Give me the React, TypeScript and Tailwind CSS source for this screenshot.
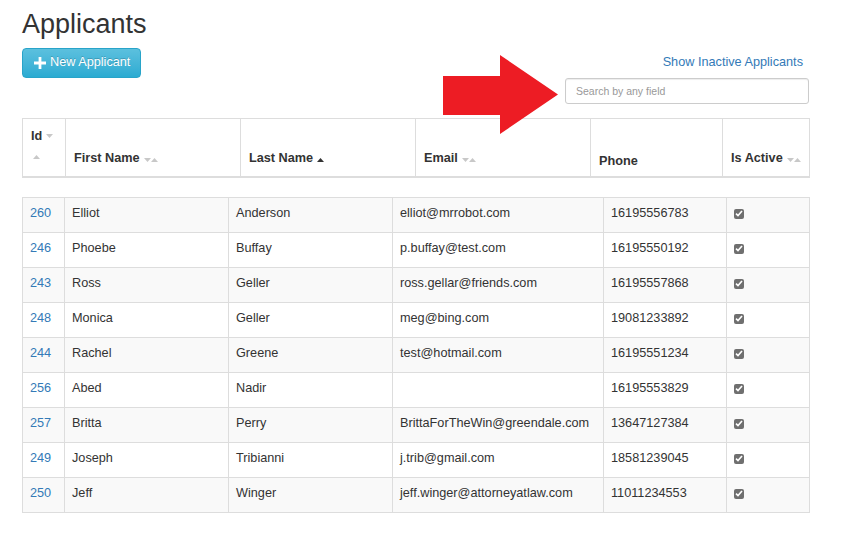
import React from "react";

type Row = { id: number; first: string; last: string; email: string; phone: string };

const rows: Row[] = [
  { id: 260, first: "Elliot", last: "Anderson", email: "elliot@mrrobot.com", phone: "16195556783" },
  { id: 246, first: "Phoebe", last: "Buffay", email: "p.buffay@test.com", phone: "16195550192" },
  { id: 243, first: "Ross", last: "Geller", email: "ross.gellar@friends.com", phone: "16195557868" },
  { id: 248, first: "Monica", last: "Geller", email: "meg@bing.com", phone: "19081233892" },
  { id: 244, first: "Rachel", last: "Greene", email: "test@hotmail.com", phone: "16195551234" },
  { id: 256, first: "Abed", last: "Nadir", email: "", phone: "16195553829" },
  { id: 257, first: "Britta", last: "Perry", email: "BrittaForTheWin@greendale.com", phone: "13647127384" },
  { id: 249, first: "Joseph", last: "Tribianni", email: "j.trib@gmail.com", phone: "18581239045" },
  { id: 250, first: "Jeff", last: "Winger", email: "jeff.winger@attorneyatlaw.com", phone: "11011234553" },
];

function Down({ color = "#c8c8c8" }: { color?: string }) {
  return (
    <svg width="7" height="4" viewBox="0 0 7 4" className="inline-block align-middle">
      <path d="M0 0h7L3.5 4z" fill={color} />
    </svg>
  );
}

function Up({ color = "#c8c8c8" }: { color?: string }) {
  return (
    <svg width="7" height="4" viewBox="0 0 7 4" className="inline-block align-middle">
      <path d="M0 4h7L3.5 0z" fill={color} />
    </svg>
  );
}

function Both() {
  return (
    <span className="ml-1 inline-flex items-center">
      <Down />
      <Up />
    </span>
  );
}

function Check() {
  return (
    <span className="inline-flex h-[10px] w-[10px] items-center justify-center rounded-[2px] bg-[#6f6f6f] align-middle">
      <svg width="8" height="7" viewBox="0 0 8 7">
        <path d="M1 3.6l2 2L7 1" stroke="#fff" strokeWidth="1.6" fill="none" />
      </svg>
    </span>
  );
}

export default function App() {
  const th = "border border-[#ddd] border-b-2 px-2 pt-[9px] pb-[8px] text-left align-bottom text-[12.7px] font-bold leading-5";
  const td = "border border-[#ddd] pl-[7px] pr-2 pt-[6px] pb-[10px] align-top leading-[18px]";

  return (
    <div className="relative min-h-[547px] bg-white pl-[22px] text-[12.7px] text-[#333]" style={{ fontFamily: '"Liberation Sans", Arial, sans-serif' }}>
      <h1 className="pt-[7px] text-[27px] font-normal leading-[34px] text-[#333]">Applicants</h1>

      <div className="mt-[7px] flex w-[787px] items-start justify-between">
        <button className="flex h-[30px] items-center gap-[4px] rounded-[4px] border border-[#28a4c9] bg-gradient-to-b from-[#5bc0de] to-[#2aabd2] pl-[11px] pr-[10px] text-[12.7px] text-white [text-shadow:0_-1px_0_rgba(0,0,0,0.2)]">
          <svg width="12" height="12" viewBox="0 0 13 13">
            <path d="M5 0h3v5h5v3H8v5H5V8H0V5h5z" fill="#fff" />
          </svg>
          New Applicant
        </button>
        <div className="flex flex-col items-end">
          <a className="mr-[6px] mt-[5px] text-[12.7px] leading-[18px] text-[#337ab7]">Show Inactive Applicants</a>
          <input
            placeholder="Search by any field"
            className="mt-[7px] h-[26px] w-[244px] rounded-[3px] border border-[#ccc] px-[10px] text-[10.5px] text-[#555] placeholder:text-[#999] shadow-[inset_0_1px_1px_rgba(0,0,0,0.075)] outline-none"
          />
        </div>
      </div>

      <table className="mt-[14px] w-[787px] table-fixed border-collapse">
        <colgroup>
          <col className="w-[43px]" />
          <col className="w-[175px]" />
          <col className="w-[175px]" />
          <col className="w-[175px]" />
          <col className="w-[132px]" />
          <col className="w-[87px]" />
        </colgroup>
        <thead>
          <tr>
            <th className="border border-[#ddd] border-b-2 px-2 pt-[7px] pb-[10px] text-left align-bottom text-[12.7px] font-bold leading-5">
              <div className="flex h-5 items-center gap-1">Id<Down /></div>
              <div className="flex h-5 items-center pl-[2px] pt-[2px]"><Up /></div>
            </th>
            <th className={th}>First Name<Both /></th>
            <th className={th}>
              Last Name
              <span className="ml-1 inline-flex"><Up color="#333" /></span>
            </th>
            <th className={th}>Email<Both /></th>
            <th className="border border-[#ddd] border-b-2 px-2 pt-[9px] pb-[5px] text-left align-bottom text-[12.7px] font-bold leading-5">Phone</th>
            <th className={th}>Is Active<Both /></th>
          </tr>
        </thead>
      </table>

      <table className="mt-[19px] w-[787px] table-fixed border-collapse">
        <colgroup>
          <col className="w-[42px]" />
          <col className="w-[164px]" />
          <col className="w-[164px]" />
          <col className="w-[211px]" />
          <col className="w-[123px]" />
          <col className="w-[83px]" />
        </colgroup>
        <tbody>
          {rows.map((r, i) => (
            <tr key={r.id} className={i % 2 === 0 ? "bg-[#f9f9f9]" : "bg-white"}>
              <td className={td + " text-[#337ab7]"}>{r.id}</td>
              <td className={td}>{r.first}</td>
              <td className={td}>{r.last}</td>
              <td className={td}>{r.email}</td>
              <td className={td}>{r.phone}</td>
              <td className={td}><Check /></td>
            </tr>
          ))}
        </tbody>
      </table>

      <svg className="absolute left-[443px] top-[55px]" width="116" height="79" viewBox="0 0 116 79">
        <path d="M0 21H57V0L115 39.5 57 79V60H0z" fill="#ed1c24" />
      </svg>
    </div>
  );
}
